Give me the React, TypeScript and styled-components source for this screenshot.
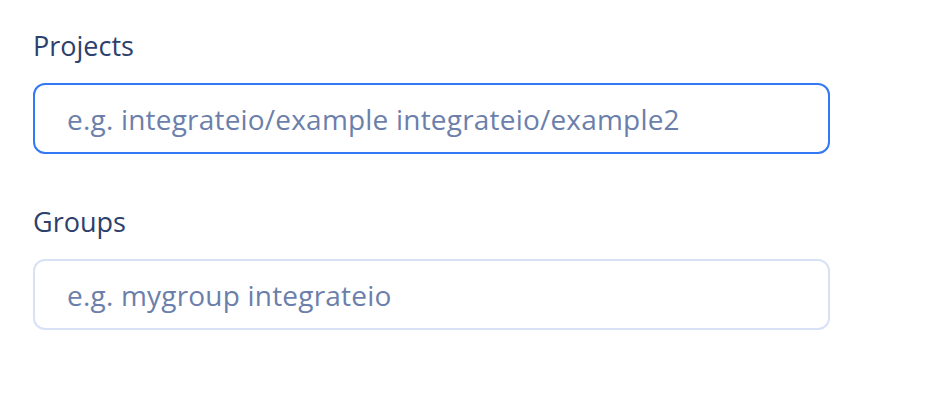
import React from 'react'
import styled, { createGlobalStyle } from 'styled-components'

const GlobalStyle = createGlobalStyle`
  body {
    margin: 0;
    background: #ffffff;
    font-family: "Open Sans", Lato, sans-serif;
  }
`

const Form = styled.div`
  display: flex;
  flex-direction: column;
  gap: 49px;
  width: 797px;
  padding: 27px 0 0 33px;
`

const Field = styled.div`
  display: flex;
  flex-direction: column;
  gap: 19px;
`

const Label = styled.label`
  font-size: 27px;
  line-height: 37px;
  color: #2d3f6c;
`

const Input = styled.input<{ $focused?: boolean }>`
  box-sizing: border-box;
  height: 71px;
  width: 100%;
  padding: 0 32px;
  border-radius: 12px;
  border: 2px solid ${p => (p.$focused ? '#3478f6' : '#d9e1f7')};
  font-family: inherit;
  font-size: 28px;
  letter-spacing: 0.2px;
  color: #2d3f6c;
  outline: none;
  background: #fff;

  &::placeholder {
    color: #6c7fab;
  }
`

export default function App() {
  return (
    <>
      <GlobalStyle />
      <Form>
        <Field>
          <Label>Projects</Label>
          <Input $focused placeholder="e.g. integrateio/example integrateio/example2" />
        </Field>
        <Field>
          <Label>Groups</Label>
          <Input placeholder="e.g. mygroup integrateio" />
        </Field>
      </Form>
    </>
  )
}
